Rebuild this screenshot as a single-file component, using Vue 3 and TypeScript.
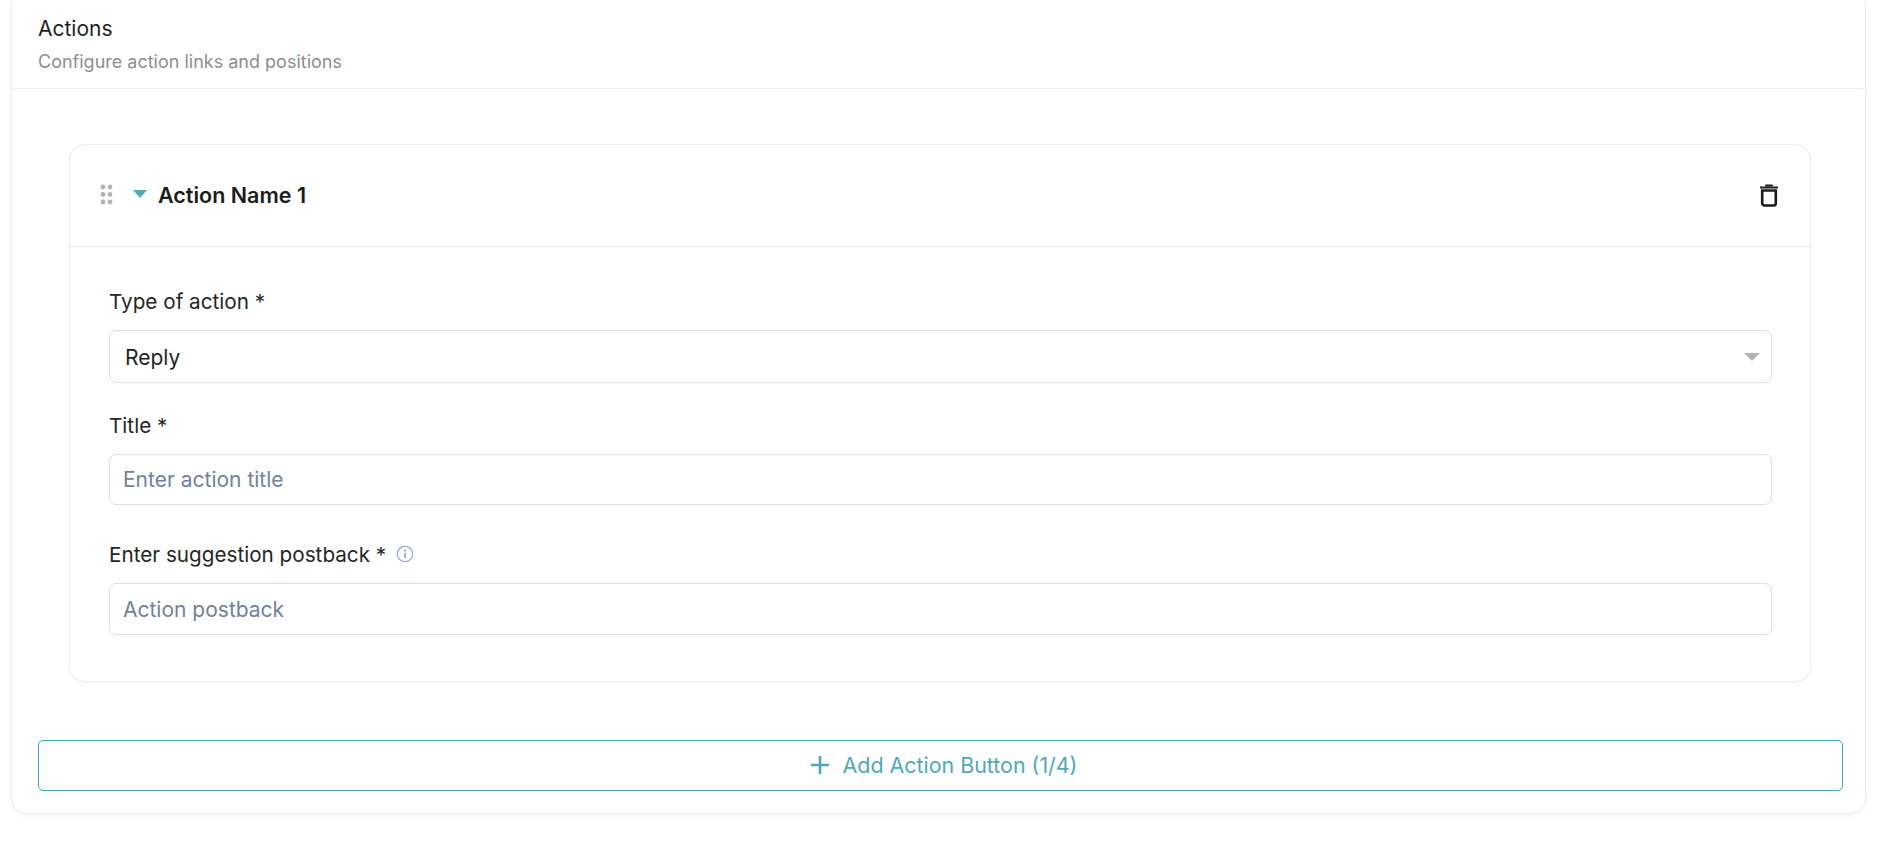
<script setup lang="ts">
interface Field {
  label: string
  placeholder: string
  info?: boolean
  tall?: boolean
}
const fields: Field[] = [
  { label: 'Title *', placeholder: 'Enter action title' },
  { label: 'Enter suggestion postback *', placeholder: 'Action postback', info: true, tall: true }
]
</script>

<template>
  <div class="page">
    <section class="card">
      <header class="card-head">
        <h2 class="head-title">Actions</h2>
        <p class="head-sub">Configure action links and positions</p>
      </header>
      <div class="card-body">
        <article class="action">
          <div class="action-head">
            <svg class="grip" width="13" height="21" viewBox="0 0 13 21" fill="#b3b3b3">
              <circle cx="3" cy="3" r="2.4" /><circle cx="10" cy="3" r="2.4" />
              <circle cx="3" cy="10.5" r="2.4" /><circle cx="10" cy="10.5" r="2.4" />
              <circle cx="3" cy="18" r="2.4" /><circle cx="10" cy="18" r="2.4" />
            </svg>
            <span class="caret"></span>
            <span class="action-name">Action Name 1</span>
            <svg class="trash" width="20" height="24" viewBox="0 0 20 24" fill="none">
              <path d="M1 4.5h18" stroke="#1c1c1c" stroke-width="2" />
              <path d="M7 2.5h6" stroke="#1c1c1c" stroke-width="2" stroke-linecap="round" />
              <path d="M3.2 7.5h13.6v12.7a2.3 2.3 0 0 1-2.3 2.3h-9a2.3 2.3 0 0 1-2.3-2.3z" stroke="#1c1c1c" stroke-width="2.6" />
            </svg>
          </div>
          <div class="action-body">
            <label class="label first">Type of action *</label>
            <div class="select">
              <span class="select-value">Reply</span>
              <span class="select-caret"></span>
            </div>
            <template v-for="f in fields" :key="f.label">
              <label class="label" :class="{ spaced: f.info }">
                {{ f.label }}
                <svg v-if="f.info" class="info" width="18" height="18" viewBox="0 0 18 18" fill="none">
                  <circle cx="9" cy="9" r="7.7" stroke="#98abd8" stroke-width="1.3" />
                  <path d="M9 8v5" stroke="#7f95cb" stroke-width="1.5" />
                  <circle cx="9" cy="5.5" r="1.1" fill="#7f95cb" />
                </svg>
              </label>
              <input class="input" :class="{ tall: f.tall }" type="text" :placeholder="f.placeholder" />
            </template>
          </div>
        </article>
        <button class="add" type="button">
          <svg width="20" height="20" viewBox="0 0 20 20" fill="none">
            <path d="M10 1v18M1 10h18" stroke="#4fa9b8" stroke-width="2.6" />
          </svg>
          <span class="add-text">Add Action Button (1/4)</span>
        </button>
      </div>
    </section>
  </div>
</template>

<style>
html, body { margin: 0; background: #fff; overflow: hidden; }
</style>

<style scoped>
.page {
  height: 862px;
  padding: 0 14px 0 11px;
  box-sizing: border-box;
  font-family: Inter, "Liberation Sans", sans-serif;
  color: #1f1f1f;
}
.card {
  margin-top: -12px;
  height: 826px;
  box-sizing: border-box;
  border: 1px solid #ebedf5;
  border-radius: 16px;
  box-shadow: 0 2px 4px rgba(230, 232, 242, 0.35);
  display: flex;
  flex-direction: column;
}
.card-head {
  height: 100px;
  box-sizing: border-box;
  padding: 27px 26px 0;
  border-bottom: 1px solid #ebedf5;
}
.head-title { margin: 0; font-size: 21px; line-height: 26px; font-weight: 400; }
.head-sub { margin: 8px 0 0; font-size: 18px; line-height: 24px; color: #8e8e8e; }
.card-body { padding: 55px 22px 0 26px; }
.action {
  margin: 0 32px 0 31px;
  height: 538px;
  box-sizing: border-box;
  border: 1px solid #ebedf5;
  border-radius: 16px;
  box-shadow: 0 1px 3px rgba(230, 232, 242, 0.4);
}
.action-head {
  height: 102px;
  box-sizing: border-box;
  padding: 0 31px 2px 30px;
  border-bottom: 1px solid #ebedf5;
  display: flex;
  align-items: center;
}
.grip { margin-right: 20px; }
.caret {
  width: 0;
  height: 0;
  border-left: 7.5px solid transparent;
  border-right: 7.5px solid transparent;
  border-top: 8px solid #4fa9b8;
  margin-right: 11px;
  margin-top: -1px;
}
.action-name { font-size: 21.5px; font-weight: 600; color: #1c1c1c; flex: 1; }
.action-body { padding: 42px 38px 0 39px; }
.label {
  display: flex;
  align-items: center;
  gap: 10px;
  font-size: 20.7px;
  line-height: 26px;
  color: #262626;
  margin: 30px 0 15px;
}
.label.first { margin-top: 0; margin-bottom: 15px; }
.label.spaced { margin-top: 37px; }
.select, .input {
  width: 100%;
  box-sizing: border-box;
  border: 1px solid #dadfee;
  border-radius: 7px;
  background: #fff;
  font-family: inherit;
  font-size: 21px;
}
.select {
  height: 53px;
  padding: 0 11px 0 15px;
  display: flex;
  align-items: center;
  justify-content: space-between;
}
.select-value { padding-top: 2px; }
.select-caret {
  width: 0;
  height: 0;
  border-left: 8px solid transparent;
  border-right: 8px solid transparent;
  border-top: 8px solid #b3b3b3;
}
.input {
  display: block;
  height: 51px;
  padding: 0 13px;
  outline: none;
}
.input.tall { height: 52px; }
.input::placeholder { color: #73819c; opacity: 1; }
.info { margin-top: -2px; }
.add {
  width: 100%;
  height: 51px;
  margin-top: 58px;
  padding: 0 0 2px 6px;
  box-sizing: border-box;
  border: 1px solid #45a6b8;
  border-radius: 5px;
  background: #fff;
  color: #4fa9b8;
  font-family: inherit;
  font-size: 21.4px;
  display: flex;
  align-items: center;
  justify-content: center;
  gap: 13px;
}
</style>
